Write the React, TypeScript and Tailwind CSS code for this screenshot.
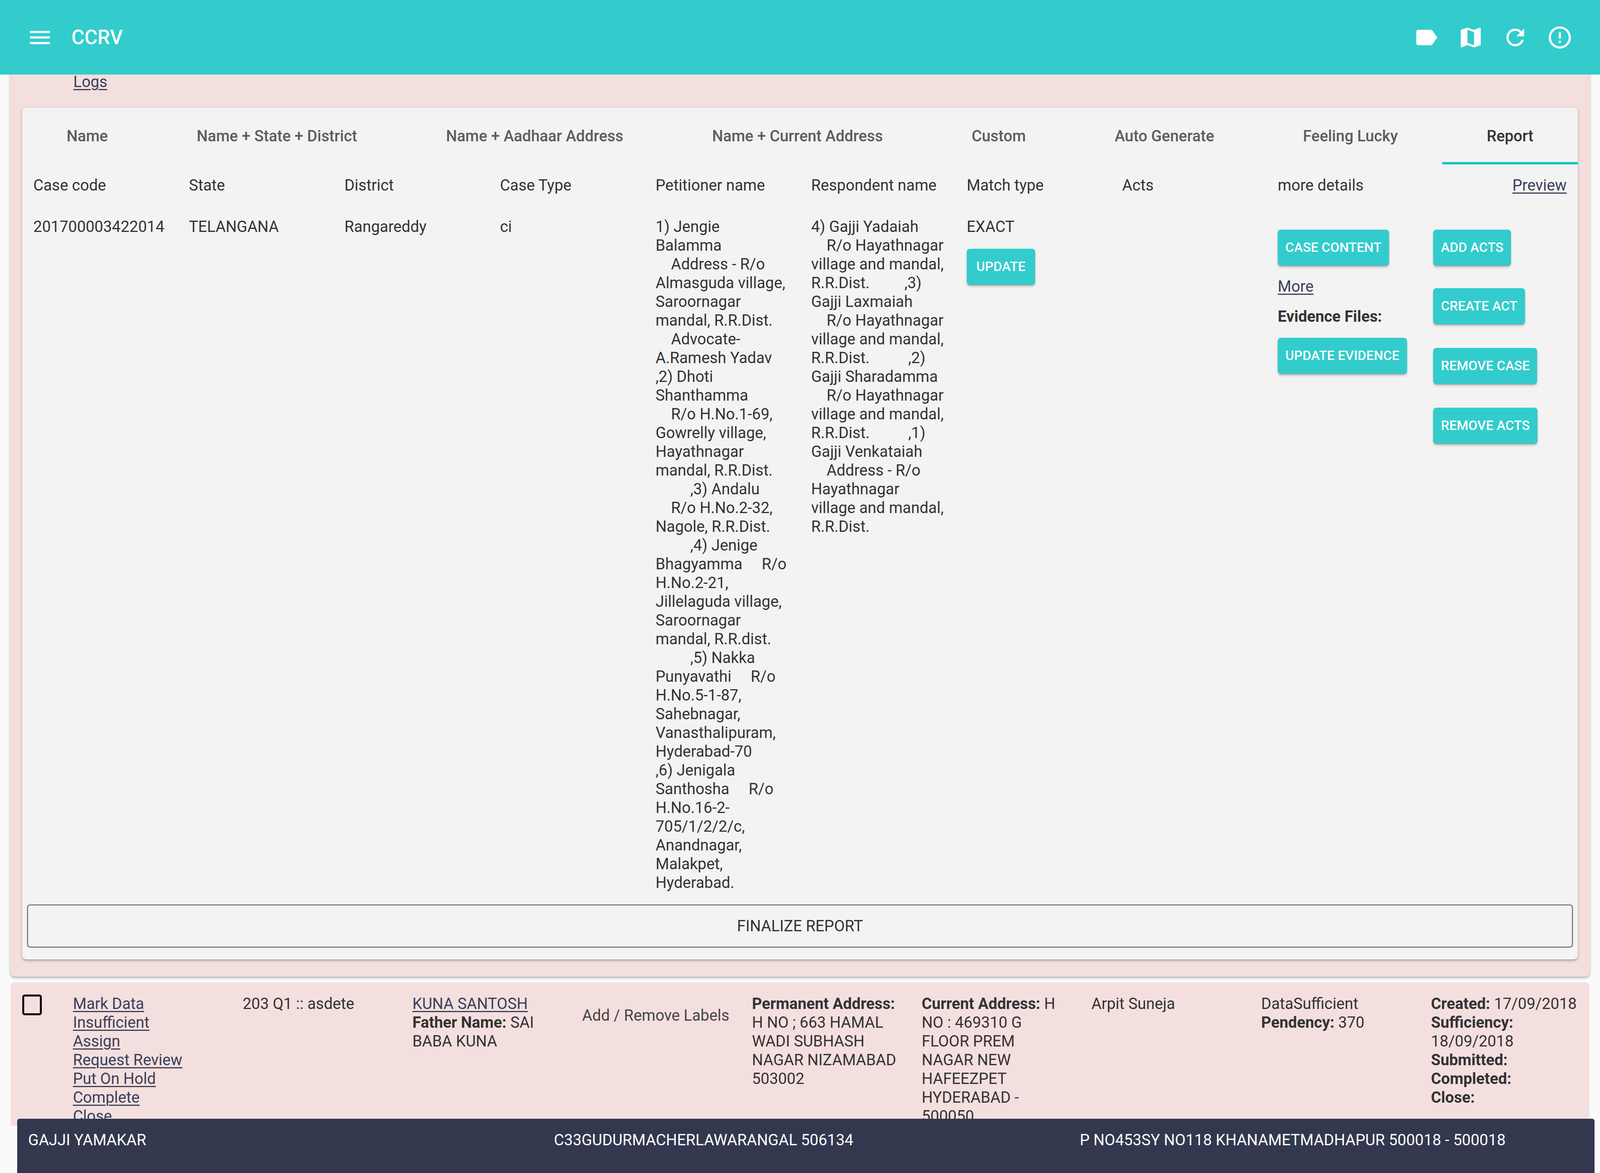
import { MdErrorOutline, MdLabel, MdMap, MdMenu, MdRefresh } from "react-icons/md";

const tabs = [
  "Name",
  "Name + State + District",
  "Name + Aadhaar Address",
  "Name + Current Address",
  "Custom",
  "Auto Generate",
  "Feeling Lucky",
  "Report",
];

const columns = [
  "Case code",
  "State",
  "District",
  "Case Type",
  "Petitioner name",
  "Respondent name",
  "Match type",
  "Acts",
  "more details",
];

const petitioner = [
  "1) Jengie",
  "Balamma",
  "    Address - R/o",
  "Almasguda village,",
  "Saroornagar",
  "mandal, R.R.Dist.",
  "    Advocate-",
  "A.Ramesh Yadav",
  ",2) Dhoti",
  "Shanthamma",
  "    R/o H.No.1-69,",
  "Gowrelly village,",
  "Hayathnagar",
  "mandal, R.R.Dist.",
  "         ,3) Andalu",
  "    R/o H.No.2-32,",
  "Nagole, R.R.Dist.",
  "         ,4) Jenige",
  "Bhagyamma     R/o",
  "H.No.2-21,",
  "Jillelaguda village,",
  "Saroornagar",
  "mandal, R.R.dist.",
  "         ,5) Nakka",
  "Punyavathi     R/o",
  "H.No.5-1-87,",
  "Sahebnagar,",
  "Vanasthalipuram,",
  "Hyderabad-70",
  ",6) Jenigala",
  "Santhosha     R/o",
  "H.No.16-2-",
  "705/1/2/2/c,",
  "Anandnagar,",
  "Malakpet,",
  "Hyderabad.",
];

const respondent = [
  "4) Gajji Yadaiah",
  "    R/o Hayathnagar",
  "village and mandal,",
  "R.R.Dist.         ,3)",
  "Gajji Laxmaiah",
  "    R/o Hayathnagar",
  "village and mandal,",
  "R.R.Dist.          ,2)",
  "Gajji Sharadamma",
  "    R/o Hayathnagar",
  "village and mandal,",
  "R.R.Dist.          ,1)",
  "Gajji Venkataiah",
  "    Address - R/o",
  "Hayathnagar",
  "village and mandal,",
  "R.R.Dist.",
];

const rowLinks = ["Mark Data", "Insufficient", "Assign", "Request Review", "Put On Hold", "Complete", "Close"];

function Lines({ lines }: { lines: string[] }) {
  return (
    <div className="whitespace-pre">
      {lines.map((line, i) => (
        <div key={i}>{line}</div>
      ))}
    </div>
  );
}

function ActionButton({ label, className = "" }: { label: string; className?: string }) {
  return (
    <button className={`block self-start h-[92px] min-w-[4.28vw] px-[0.475vw] rounded-[8px] bg-[#32cccc] text-white text-[0.829vw] font-medium uppercase whitespace-nowrap shadow-[0_3px_3px_-1px_rgba(0,0,0,0.25),0_5px_6px_0_rgba(0,0,0,0.16)] ${className}`}>
      {label}
    </button>
  );
}

function RowLink({ children }: { children: string }) {
  return <a className="underline text-[#3a4058] decoration-[3px] underline-offset-[5px]">{children}</a>;
}

export default function App() {
  return (
    <div className="relative h-[3004px] w-full overflow-hidden bg-[#fafafa] font-['Roboto',sans-serif] text-[0.972vw] leading-[48px] text-[#333333]">
      {/* top bar */}
      <header className="relative z-10 flex h-[191px] items-center bg-[#32cccc] pl-[1.667vw] text-white">
        <MdMenu className="h-[72px] w-[1.667vw]" />
        <span className="ml-[1.134vw] text-[1.25vw] font-medium">CCRV</span>
        <div className="ml-auto flex items-center gap-[1.111vw] pr-[1.69vw]">
          <MdLabel className="h-[68px] w-[1.667vw]" />
          <MdMap className="h-[68px] w-[1.667vw]" />
          <MdRefresh className="h-[68px] w-[1.667vw]" />
          <MdErrorOutline className="h-[68px] w-[1.667vw]" />
        </div>
      </header>

      <main className="-mt-[5px] px-[0.648vw]">
        {/* expanded case */}
        <section className="rounded-b-[10px] bg-[#f4dfdf] pb-[44px] shadow-[0_3px_8px_rgba(0,0,0,0.2),0_3px_3px_rgba(0,0,0,0.14)]">
          <div className="mb-[42px] pl-[3.935vw]">
            <RowLink>Logs</RowLink>
          </div>

          <div className="mx-[0.741vw] rounded-[10px] bg-[#f3f3f3] pb-[30px] shadow-[0_3px_8px_rgba(0,0,0,0.2),0_3px_3px_rgba(0,0,0,0.14)]">
            <div className="flex h-[145px]">
              {tabs.map((tab) => (
                <div
                  key={tab}
                  className={`flex flex-auto items-center justify-center whitespace-nowrap font-medium ${
                    tab === "Report" ? "border-b-[6px] border-[#0cc6c6] pt-[6px] text-[#333333]" : "text-[#5c5c5c]"
                  }`}
                >
                  {tab}
                </div>
              ))}
            </div>

            <div className="grid grid-cols-10">
              {columns.map((column) => (
                <div key={column} className="px-[0.694vw] pb-[29px] pt-[30px]">
                  {column}
                </div>
              ))}
              <div className="px-[0.694vw] pb-[29px] pt-[30px] text-right">
                <RowLink>Preview</RowLink>
              </div>

              <div className="px-[0.694vw] pt-[29px]">201700003422014</div>
              <div className="px-[0.694vw] pt-[29px]">TELANGANA</div>
              <div className="px-[0.694vw] pt-[29px]">Rangareddy</div>
              <div className="px-[0.694vw] pt-[29px]">ci</div>
              <div className="px-[0.694vw] pt-[29px]">
                <Lines lines={petitioner} />
              </div>
              <div className="px-[0.694vw] pt-[29px]">
                <Lines lines={respondent} />
              </div>
              <div className="flex flex-col px-[0.694vw] pt-[29px]">
                <div>EXACT</div>
                <ActionButton label="Update" className="mt-[32px]" />
              </div>
              <div className="px-[0.694vw] pt-[29px]" />
              <div className="flex flex-col px-[0.694vw] pt-[60px]">
                <ActionButton label="Case Content" />
                <div className="mt-[30px]">
                  <RowLink>More</RowLink>
                </div>
                <div className="mt-[29px] font-bold">Evidence Files:</div>
                <ActionButton label="Update Evidence" className="mt-[30px]" />
              </div>
              <div className="flex flex-col px-[0.694vw] pt-[60px]">
                <ActionButton label="Add Acts" />
                <ActionButton label="Create Act" className="mt-[58px]" />
                <ActionButton label="Remove Case" className="mt-[61px]" />
                <ActionButton label="Remove Acts" className="mt-[61px]" />
              </div>
            </div>

            <div className="mx-[0.3vw] mt-[31px]">
              <button className="block h-[111px] w-full rounded-[8px] border-[3px] border-[#808080] uppercase">
                Finalize Report
              </button>
            </div>
          </div>
        </section>

        {/* next case row */}
        <section className="mt-[15px] rounded-t-[10px] bg-[#f4dfdf] pl-[0.741vw] pt-[31px]">
          <div className="grid grid-cols-[1.729vw_repeat(9,9.17vw)] gap-x-[1.44vw]">
            <div className="h-[53px] w-[1.227vw] rounded-[6px] border-[5px] border-black" />
            <div>
              {rowLinks.map((link) => (
                <div key={link}>
                  <RowLink>{link}</RowLink>
                </div>
              ))}
            </div>
            <div>203 Q1 :: asdete</div>
            <div>
              <RowLink>KUNA SANTOSH</RowLink>
              <br />
              <b>Father Name:</b> SAI BABA KUNA
            </div>
            <div className="whitespace-nowrap pt-[30px] text-[#444444]">Add / Remove Labels</div>
            <div>
              <b>Permanent Address:</b> H NO ; 663 HAMAL WADI SUBHASH NAGAR NIZAMABAD 503002
            </div>
            <div>
              <b>Current Address:</b> H NO : 469310 G FLOOR PREM NAGAR NEW HAFEEZPET HYDERABAD - 500050
            </div>
            <div>Arpit Suneja</div>
            <div>
              DataSufficient
              <br />
              <b>Pendency:</b> 370
            </div>
            <div>
              <b>Created:</b> 17/09/2018
              <br />
              <b>Sufficiency:</b> 18/09/2018
              <br />
              <b>Submitted:</b>
              <br />
              <b>Completed:</b>
              <br />
              <b>Close:</b>
            </div>
          </div>
        </section>
      </main>

      {/* address strip stuck to the bottom */}
      <footer className="absolute bottom-0 left-[1.065vw] z-10 grid h-[139px] w-[98.59vw] grid-cols-3 rounded-t-[6px] bg-[#33384f] pt-[31px] text-white">
        <div className="pl-[0.694vw]">GAJJI YAMAKAR</div>
        <div className="pl-[0.694vw]">C33GUDURMACHERLAWARANGAL 506134</div>
        <div className="pl-[0.694vw]">P NO453SY NO118 KHANAMETMADHAPUR 500018 - 500018</div>
      </footer>
    </div>
  );
}
